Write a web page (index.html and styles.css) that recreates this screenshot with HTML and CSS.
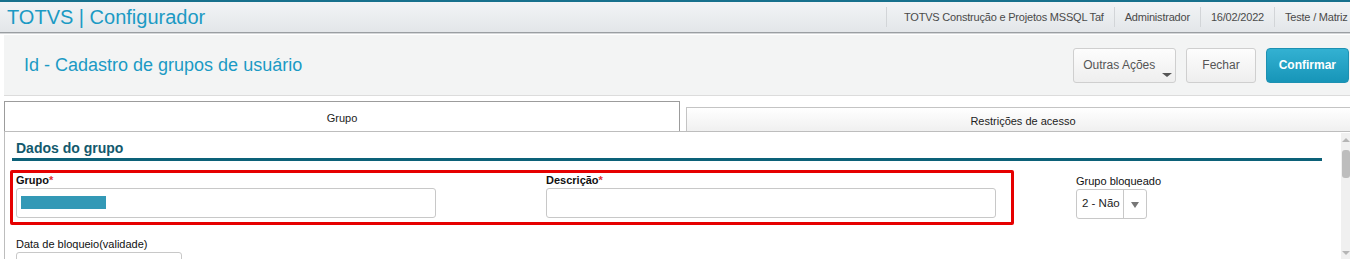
FILE: index.html
```html
<!DOCTYPE html>
<html lang="pt-BR">
<head>
    <meta charset="UTF-8">
    <title>TOTVS | Configurador</title>
    <link rel="stylesheet" href="styles.css">
</head>
<body>

    <header class="topbar">
        <div class="app-title">TOTVS | Configurador</div>
        <ul class="session-info">
            <li class="first">TOTVS Construção e Projetos MSSQL Taf</li>
            <li>Administrador</li>
            <li>16/02/2022</li>
            <li class="last">Teste / Matriz</li>
        </ul>
    </header>

    <div class="page">
        <div class="page-header">
            <h1>Id - Cadastro de grupos de usuário</h1>
            <div class="actions">
                <button class="btn btn-menu">Outras Ações<span class="caret"></span></button>
                <button class="btn btn-close">Fechar</button>
                <button class="btn btn-primary">Confirmar</button>
            </div>
        </div>

        <!-- abas -->
        <div class="tabs">
            <div class="tab active">Grupo</div>
            <div class="tab">Restrições de acesso</div>
        </div>

        <div class="panel">
            <div class="form">
                <h2 class="section-title">Dados do grupo</h2>

                <div class="row">
                    <div class="highlight">
                        <div class="field field-grupo">
                            <label>Grupo<span class="req">*</span></label>
                            <div class="input"><span class="selected-text"></span></div>
                        </div>
                        <div class="field field-desc">
                            <label>Descrição<span class="req">*</span></label>
                            <div class="input"></div>
                        </div>
                    </div>
                    <div class="field field-bloq">
                        <label class="plain">Grupo bloqueado</label>
                        <div class="select">
                            <span class="select-value">2 - Não</span>
                            <span class="select-arrow"></span>
                        </div>
                    </div>
                </div>

                <div class="row row-second">
                    <div class="field field-data">
                        <label class="plain">Data de bloqueio(validade)</label>
                        <div class="input"></div>
                    </div>
                </div>
            </div>

            <div class="scrollbar">
                <span class="arrow-up"></span>
                <span class="thumb"></span>
                <span class="arrow-down"></span>
            </div>
        </div>
    </div>

</body>
</html>
```

FILE: styles.css
```css
body {
    margin: 0;
    padding: 0;
    font-family: "Liberation Sans", Arial, sans-serif;
    background-color: #fff;
    overflow: hidden;
    height: 259px;
}

/* barra superior */
.topbar {
    display: flex;
    align-items: center;
    height: 30px;
    border-top: 2px solid #17718d;
    border-bottom: 1px solid #9a9ea2;
    box-shadow: 0 1px 0 #d4d6d8;
    background: linear-gradient(#f2f4f6, #e3e6e9);
    white-space: nowrap;
    overflow: hidden;
}

.app-title {
    flex: 0 0 879px;
    padding-left: 7px;
    font-size: 20px;
    color: #1b9ac4;
}

.session-info {
    display: flex;
    flex-shrink: 0;
    list-style: none;
    margin: 0;
    padding: 0;
    font-size: 11px;
    letter-spacing: -0.2px;
    color: #4a4a4a;
}

.session-info li {
    padding: 4px 10px;
    border-left: 1px solid #d2d5d8;
}

.session-info li.first {
    padding-left: 17px;
}

.session-info li.last {
    padding-right: 0;
}

.page {
    padding: 2px 0 0 4px;
}

/* cabeçalho da tela */
.page-header {
    display: flex;
    align-items: center;
    justify-content: space-between;
    height: 60px;
    padding: 0 1px 0 20px;
    background-color: #f3f4f4;
    border-bottom: 1px solid #dcdcdc;
}

.page-header h1 {
    margin: 0;
    font-size: 18px;
    font-weight: normal;
    color: #1b9ac4;
}

.actions {
    display: flex;
    gap: 10px;
}

.btn {
    position: relative;
    height: 35px;
    padding: 0 16px;
    font-family: "Liberation Sans", Arial, sans-serif;
    font-size: 12px;
    color: #555;
    background: linear-gradient(#fdfdfd, #eeeeee);
    border: 1px solid #cfcfcf;
    border-radius: 3px;
}

.btn-menu {
    padding: 0 20px 0 9px;
}

.btn-close {
    padding: 0 15px;
}

.caret {
    position: absolute;
    right: 3px;
    bottom: 5px;
    border-left: 5px solid transparent;
    border-right: 5px solid transparent;
    border-top: 4px solid #555;
}

.btn-primary {
    padding: 0 12px;
    font-weight: bold;
    color: #fff;
    background: linear-gradient(#33b1d2, #1795b8);
    border-color: #1d91b2;
    border-radius: 4px;
}

/* abas */
.tabs {
    display: flex;
    align-items: flex-end;
    gap: 6px;
    margin-top: 5px;
    height: 30px;
}

.tab {
    box-sizing: border-box;
    text-align: center;
    font-size: 11px;
    color: #222;
}

.tab.active {
    width: 676px;
    height: 30px;
    padding-top: 10px;
    background: #fff;
    border: 1px solid #9c9c9c;
    border-bottom: none;
}

.tab:not(.active) {
    flex: 1;
    height: 24px;
    padding-top: 7px;
    background: linear-gradient(#ffffff, #f0f0f0);
    border: 1px solid #c4c4c4;
    border-bottom: none;
    margin-right: -10px;
}

.panel {
    display: flex;
    height: 128px;
    border-top: 1px solid #bdbdbd;
    border-left: 1px solid #bdbdbd;
}

.form {
    flex: 1;
    padding: 0 19px 0 7px;
}

.section-title {
    margin: 8px 0 0;
    padding: 0 0 2px 4px;
    font-size: 14px;
    color: #12596d;
    border-bottom: 3px solid #0c6178;
}

.row {
    display: flex;
    align-items: flex-start;
}

.highlight {
    display: flex;
    gap: 110px;
    width: 992px;
    margin: 9px 0 0 -2px;
    padding: 1px 3px 4px 3px;
    border: 3px solid #e60000;
    border-radius: 2px;
}

.field label {
    display: block;
    height: 14px;
    font-size: 11px;
    font-weight: bold;
    color: #111;
}

.field label.plain {
    font-weight: normal;
}

.req {
    color: #e23030;
}

.input {
    box-sizing: border-box;
    height: 30px;
    padding: 7px 4px;
    border: 1px solid #c8c8c8;
    border-radius: 3px;
    background: #fff;
}

.field-grupo .input {
    width: 420px;
}

.field-desc .input {
    width: 450px;
}

.selected-text {
    display: block;
    width: 85px;
    height: 13px;
    background: #3399b6;
}

.field-bloq {
    margin: 14px 0 0 62px;
}

.select {
    box-sizing: border-box;
    display: flex;
    width: 71px;
    height: 30px;
    border: 1px solid #c8c8c8;
    border-radius: 3px;
    font-size: 11.5px;
    color: #222;
}

.select-value {
    width: 41px;
    padding: 7px 0 0 5px;
    border-right: 1px solid #c8c8c8;
}

.select-arrow {
    margin: 12px 0 0 7px;
    width: 0;
    height: 0;
    border-left: 4px solid transparent;
    border-right: 4px solid transparent;
    border-top: 6px solid #777;
}

.row-second {
    margin-top: 13px;
}

.field-data {
    margin-left: 4px;
}

.field-data .input {
    width: 166px;
}

/* barra de rolagem */
.scrollbar {
    position: relative;
    width: 9px;
    margin-top: 1px;
    background: #f0f0f0;
}

.arrow-up {
    position: absolute;
    top: 5px;
    left: 1px;
    border-left: 4px solid transparent;
    border-right: 4px solid transparent;
    border-bottom: 4px solid #b5b5b5;
}

.thumb {
    position: absolute;
    top: 17px;
    left: 1px;
    width: 8px;
    height: 28px;
    border-radius: 3px;
    background: #bdbdbd;
}

.arrow-down {
    position: absolute;
    top: 118px;
    left: 1px;
    border-left: 4px solid transparent;
    border-right: 4px solid transparent;
    border-top: 4px solid #b5b5b5;
}
```
